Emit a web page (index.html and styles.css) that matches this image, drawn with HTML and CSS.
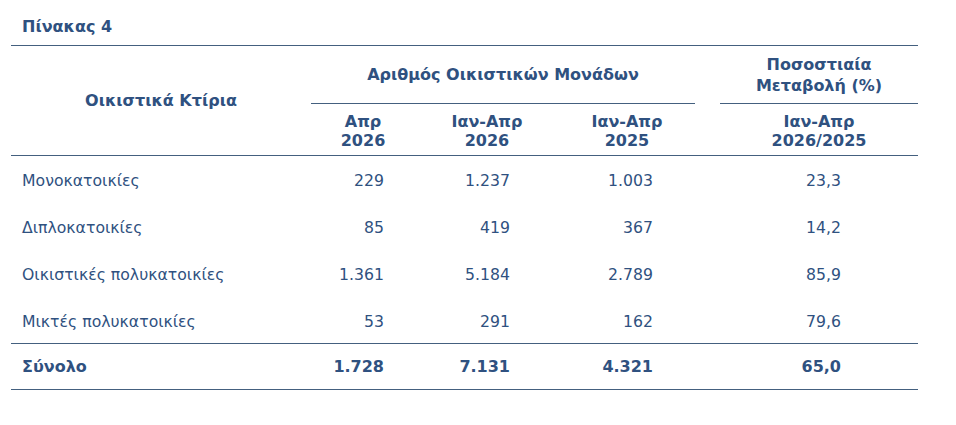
FILE: index.html
```html
<!DOCTYPE html>
<html lang="el">
<head>
<meta charset="utf-8">
<title>Πίνακας 4</title>
<link rel="stylesheet" href="styles.css">
</head>
<body>
<div class="wrap">
  <div class="title">Πίνακας 4</div>
  <div class="table">
    <div class="grid head">
      <div class="h-label">Οικιστικά Κτίρια</div>
      <div class="h-group">Αριθμός Οικιστικών Μονάδων</div>
      <div class="gap"></div>
      <div class="h-pct">Ποσοστιαία<br>Μεταβολή (%)</div>
      <div class="h-sub">Απρ<br>2026</div>
      <div class="h-sub">Ιαν-Απρ<br>2026</div>
      <div class="h-sub">Ιαν-Απρ<br>2025</div>
      <div class="gap"></div>
      <div class="h-sub">Ιαν-Απρ<br>2026/2025</div>
    </div>
    <div class="body">
      <div class="row">
        <div class="lbl">Μονοκατοικίες</div>
        <div class="n c1">229</div>
        <div class="n c2">1.237</div>
        <div class="n c3">1.003</div>
        <div></div>
        <div class="n c4">23,3</div>
      </div>
      <div class="row">
        <div class="lbl">Διπλοκατοικίες</div>
        <div class="n c1">85</div>
        <div class="n c2">419</div>
        <div class="n c3">367</div>
        <div></div>
        <div class="n c4">14,2</div>
      </div>
      <div class="row">
        <div class="lbl">Οικιστικές πολυκατοικίες</div>
        <div class="n c1">1.361</div>
        <div class="n c2">5.184</div>
        <div class="n c3">2.789</div>
        <div></div>
        <div class="n c4">85,9</div>
      </div>
      <div class="row last">
        <div class="lbl">Μικτές πολυκατοικίες</div>
        <div class="n c1">53</div>
        <div class="n c2">291</div>
        <div class="n c3">162</div>
        <div></div>
        <div class="n c4">79,6</div>
      </div>
    </div>
    <div class="total">
      <div class="row">
        <div class="lbl">Σύνολο</div>
        <div class="n c1">1.728</div>
        <div class="n c2">7.131</div>
        <div class="n c3">4.321</div>
        <div></div>
        <div class="n c4">65,0</div>
      </div>
    </div>
  </div>
</div>
</body>
</html>
```

FILE: styles.css
```css
html, body {
  margin: 0;
  padding: 0;
  background: #ffffff;
}
body {
  font-family: "DejaVu Sans", Verdana, sans-serif;
  color: #2f5180;
  font-size: 15.7px;
}
.wrap {
  padding-left: 11px;
  width: 907px;
}
.title {
  font-weight: bold;
  font-size: 16px;
  line-height: 20px;
  padding: 17px 0 8px 11px;
}
.grid {
  display: grid;
  grid-template-columns: 300px 104px 144px 136px 25px 198px;
}
.head {
  border-top: 1px solid #44607f;
  border-bottom: 1px solid #44607f;
  grid-template-rows: 58px 51px;
  font-weight: bold;
  font-size: 16px;
}
.head > div {
  display: flex;
  align-items: center;
  justify-content: center;
  text-align: center;
}
.h-label {
  grid-row: 1 / 3;
  grid-column: 1;
}
.h-group {
  grid-column: 2 / 5;
  border-bottom: 1px solid #44607f;
  line-height: 20px;
  padding-top: 1px;
}
.h-pct {
  border-bottom: 1px solid #44607f;
  line-height: 21px;
}
.h-sub {
  line-height: 19px;
  padding-top: 2px;
}
.row {
  display: grid;
  grid-template-columns: 300px 104px 144px 136px 25px 198px;
  height: 47px;
  align-items: center;
  padding-top: 2px;
  box-sizing: border-box;
}
.body .row.last {
  height: 46px;
}
.total {
  border-top: 1px solid #44607f;
  border-bottom: 1px solid #44607f;
  font-weight: bold;
  font-size: 16px;
}
.total .row {
  height: 45px;
  padding-top: 0;
}
.lbl {
  padding-left: 11px;
}
.n {
  text-align: right;
}
.c1 { padding-right: 31px; }
.c2 { padding-right: 49px; }
.c3 { padding-right: 42px; }
.c4 { padding-right: 77px; }
```
